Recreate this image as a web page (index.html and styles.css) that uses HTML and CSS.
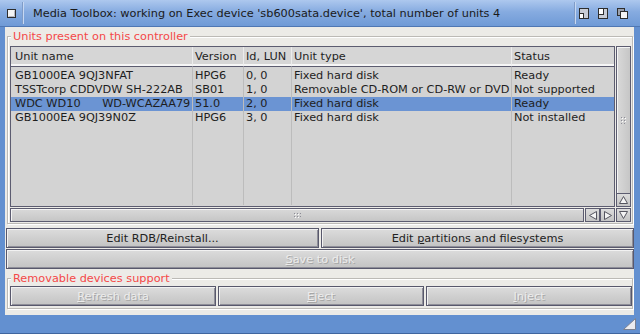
FILE: index.html
```html
<!DOCTYPE html>
<html lang="en">
<head>
    <meta charset="UTF-8">
    <title>Media Toolbox</title>
    <link rel="stylesheet" href="styles.css">
</head>
<body>
    <div class="window">
        <div class="titlebar">
            <svg class="close-gadget" width="9" height="9" viewBox="0 0 9 9">
                <rect x="0.5" y="0.5" width="8" height="8" fill="#f4f4f4" stroke="#2d2d2d"/>
                <path d="M1.5 7.5 H7.5 V1.5" fill="none" stroke="#b8b8c0"/>
            </svg>
            <span class="title-sep"></span>
            <div class="title">Media Toolbox: working on Exec device 'sb600sata.device', total number of units 4</div>
            <span class="title-sep right"></span>
            <div class="gadgets">
                <svg width="10" height="11" viewBox="0 0 10 11">
                    <rect x="0.5" y="0.5" width="9" height="10" fill="#c9cdd6" stroke="#2d2d2d"/>
                    <rect x="0.5" y="5.5" width="4" height="5" fill="#fff" stroke="#2d2d2d"/>
                </svg>
                <svg width="10" height="11" viewBox="0 0 10 11">
                    <rect x="0.5" y="0.5" width="9" height="10" fill="#c9cdd6" stroke="#2d2d2d"/>
                    <rect x="0.5" y="0.5" width="5" height="6" fill="#fff" stroke="#2d2d2d"/>
                </svg>
                <svg width="11" height="11" viewBox="0 0 11 11">
                    <rect x="0.5" y="0.5" width="7" height="7" fill="#9aa0ac" stroke="#2d2d2d"/>
                    <rect x="3.5" y="3.5" width="7" height="7" fill="#f4f4f4" stroke="#2d2d2d"/>
                </svg>
            </div>
        </div>

        <div class="window-body">
            <fieldset class="group units-group">
                <legend>Units present on this controller</legend>
                <div class="listview">
                    <div class="list">
                        <table class="units-table">
                            <colgroup>
                                <col class="c-name">
                                <col class="c-version">
                                <col class="c-id">
                                <col class="c-type">
                                <col class="c-status">
                            </colgroup>
                            <thead>
                                <tr>
                                    <th class="first">Unit name</th>
                                    <th>Version</th>
                                    <th>Id, LUN</th>
                                    <th>Unit type</th>
                                    <th>Status</th>
                                </tr>
                            </thead>
                            <tbody>
                                <tr>
                                    <td class="first">GB1000EA 9QJ3NFAT</td>
                                    <td>HPG6</td>
                                    <td>0, 0</td>
                                    <td>Fixed hard disk</td>
                                    <td>Ready</td>
                                </tr>
                                <tr>
                                    <td class="first">TSSTcorp CDDVDW SH-222AB</td>
                                    <td>SB01</td>
                                    <td>1, 0</td>
                                    <td>Removable CD-ROM or CD-RW or DVD</td>
                                    <td>Not supported</td>
                                </tr>
                                <tr class="selected">
                                    <td class="first">WDC WD10      WD-WCAZAA79</td>
                                    <td>51.0</td>
                                    <td>2, 0</td>
                                    <td>Fixed hard disk</td>
                                    <td>Ready</td>
                                </tr>
                                <tr>
                                    <td class="first">GB1000EA 9QJ39N0Z</td>
                                    <td>HPG6</td>
                                    <td>3, 0</td>
                                    <td>Fixed hard disk</td>
                                    <td>Not installed</td>
                                </tr>
                                <tr class="filler">
                                    <td></td><td></td><td></td><td></td><td></td>
                                </tr>
                            </tbody>
                        </table>
                    </div>

                    <div class="vscroll">
                        <div class="knob">
                            <svg width="5" height="7" viewBox="0 0 5 7">
                                <g fill="#8c8c96"><rect x="0" y="0" width="1" height="1"/><rect x="3" y="0" width="1" height="1"/><rect x="0" y="3" width="1" height="1"/><rect x="3" y="3" width="1" height="1"/><rect x="0" y="6" width="1" height="1"/><rect x="3" y="6" width="1" height="1"/></g>
                                <g fill="#fff"><rect x="1" y="1" width="1" height="1"/><rect x="4" y="1" width="1" height="1"/><rect x="1" y="4" width="1" height="1"/><rect x="4" y="4" width="1" height="1"/></g>
                            </svg>
                        </div>
                        <div class="arrow">
                            <svg width="9" height="8" viewBox="0 0 9 8"><path d="M4.5 0.5 L8.5 7.5 H0.5 Z" fill="#f4f4f4" stroke="#55555f"/></svg>
                        </div>
                    </div>

                    <div class="hscroll">
                        <div class="knob">
                            <svg width="7" height="5" viewBox="0 0 7 5">
                                <g fill="#8c8c96"><rect x="0" y="0" width="1" height="1"/><rect x="3" y="0" width="1" height="1"/><rect x="6" y="0" width="1" height="1"/><rect x="0" y="3" width="1" height="1"/><rect x="3" y="3" width="1" height="1"/><rect x="6" y="3" width="1" height="1"/></g>
                                <g fill="#fff"><rect x="1" y="1" width="1" height="1"/><rect x="4" y="1" width="1" height="1"/><rect x="1" y="4" width="1" height="1"/><rect x="4" y="4" width="1" height="1"/></g>
                            </svg>
                        </div>
                        <div class="arrow">
                            <svg width="8" height="9" viewBox="0 0 8 9"><path d="M0.5 4.5 L7.5 0.5 V8.5 Z" fill="#f4f4f4" stroke="#55555f"/></svg>
                        </div>
                        <div class="arrow">
                            <svg width="8" height="9" viewBox="0 0 8 9"><path d="M7.5 4.5 L0.5 0.5 V8.5 Z" fill="#f4f4f4" stroke="#55555f"/></svg>
                        </div>
                    </div>

                    <div class="arrow">
                        <svg width="9" height="8" viewBox="0 0 9 8"><path d="M4.5 7.5 L8.5 0.5 H0.5 Z" fill="#f4f4f4" stroke="#55555f"/></svg>
                    </div>
                </div>
            </fieldset>

            <div class="button-row">
                <button class="btn">Edit RDB/Reinstall...</button>
                <button class="btn">Edit <u>p</u>artitions and filesystems</button>
            </div>
            <button class="btn full" disabled><u>S</u>ave to disk</button>

            <fieldset class="group removable-group">
                <legend>Removable devices support</legend>
                <div class="button-row three">
                    <button class="btn" disabled><u>R</u>efresh data</button>
                    <button class="btn" disabled><u>E</u>ject</button>
                    <button class="btn" disabled><u>I</u>nject</button>
                </div>
            </fieldset>
        </div>

        <div class="bottom-border">
            <svg width="13" height="12" viewBox="0 0 13 12">
                <path d="M12.5 0.5 V11.5 H0.5 Z" fill="#ececf0" stroke="#7c8190"/>
            </svg>
        </div>
    </div>
</body>
</html>
```

FILE: styles.css
```css
body {
    margin: 0;
    background: #6390d0;
    font-family: 'DejaVu Sans', sans-serif;
    font-size: 11.3px;
    color: #1e1e1e;
}
.window {
    width: 640px;
    height: 334px;
    display: flex;
    flex-direction: column;
    background: #6390d0;
    overflow: hidden;
}

/* title bar */
.titlebar {
    height: 27px;
    display: flex;
    align-items: center;
    padding: 0 12px 0 7px;
    background: linear-gradient(#adc8ee, #86abe0 45%, #6f9ad6);
    border-bottom: 1px solid #4f77b3;
    box-sizing: border-box;
}
.close-gadget {
    display: block;
}
.title-sep {
    width: 1px;
    height: 22px;
    background: #7f9cc8;
    border-right: 1px solid #c7d8f2;
    margin: 0 9px 0 6px;
}
.title-sep.right {
    margin: 0 1px 0 auto;
}
.title {
    font-size: 11.3px;
    color: #1a1a1a;
    white-space: nowrap;
}
.gadgets {
    display: flex;
    gap: 9px;
    margin-left: 2px;
}
.gadgets svg {
    display: block;
}

/* body */
.window-body {
    flex: 1;
    margin: 0 6px 0 5px;
    padding: 0 0 0 1px;
    background: #ecebe7;
    display: flex;
    flex-direction: column;
}
.group {
    margin: 3px 1px 0 1px;
    padding: 3px 0 1px 2px;
    border: 1px solid #bcbab6;
    box-shadow: inset 1px 1px 0 #fff, 1px 1px 0 #fff;
    min-width: 0;
}
.group legend {
    color: #f44848;
    line-height: 13px;
    padding: 0 2px;
    margin-left: 1px;
    background: #ecebe7;
}
.removable-group {
    padding: 1px 0 2px 2px;
    margin-top: 3px;
}

/* list view */
.listview {
    display: grid;
    grid-template-columns: 605px 15px;
    grid-template-rows: 161px 14px;
    column-gap: 1px;
    row-gap: 1px;
}
.list {
    border: 1px solid #5c5c70;
    background: #d3d3d3;
    overflow: hidden;
}
.units-table {
    width: 603px;
    table-layout: fixed;
    border-collapse: separate;
    border-spacing: 0;
}
.c-name { width: 182px; }
.c-version { width: 51px; }
.c-id { width: 48px; }
.c-type { width: 220px; }
.c-status { width: 102px; }
.units-table th,
.units-table td {
    padding: 0 0 0 2px;
    text-align: left;
    font-weight: normal;
    white-space: pre;
    overflow: hidden;
    border-right: 1px solid #bcbcbc;
}
.units-table th:last-child,
.units-table td:last-child {
    border-right: none;
}
.units-table .first {
    padding-left: 4px;
}
.units-table th {
    background: #d6d6d6;
    padding-top: 2px;
    line-height: 15px;
    border-bottom: 2px solid #f6f6f6;
    border-right-color: #ececec;
}
.units-table td {
    line-height: 14px;
    height: 14px;
}
.units-table tbody tr:first-child td {
    border-top: 1px solid #5c5c70;
    padding-top: 2px;
}
.units-table tr.selected td {
    background: #6b94d3;
}
.units-table tr.filler td {
    height: 80px;
}

.knob {
    background: linear-gradient(90deg, #d9d9d9, #c6c6c6);
    border: 1px solid #5c5c70;
    box-shadow: inset 1px 1px 0 #f4f4f4;
    display: flex;
    align-items: center;
    justify-content: center;
}
.hscroll .knob {
    background: linear-gradient(#d9d9d9, #c6c6c6);
}
.vscroll {
    display: flex;
    flex-direction: column;
}
.vscroll .knob {
    flex: 1;
}
.hscroll {
    display: flex;
}
.hscroll .knob {
    flex: 1;
    margin-right: 1px;
}
.arrow {
    width: 13px;
    height: 12px;
    border: 1px solid #5c5c70;
    background: linear-gradient(#dcdcdc, #c4c4c4);
    display: flex;
    align-items: center;
    justify-content: center;
}
.arrow svg {
    display: block;
}
.vscroll .arrow {
    border-top: none;
}

/* buttons */
.button-row {
    display: grid;
    grid-template-columns: 1fr 1fr;
    gap: 2px;
    margin-top: 4px;
}
.button-row.three {
    grid-template-columns: 1fr 1fr 1fr;
    margin-top: 0;
}
.btn {
    height: 20px;
    padding: 0;
    font-family: 'DejaVu Sans', sans-serif;
    font-size: 11.3px;
    color: #222;
    background: linear-gradient(#dcdcdc, #c3c3c3);
    border: 1px solid #58586c;
    box-shadow: inset 1px 1px 0 #f2f2f2, inset -1px -1px 0 #8e8e98;
}
.btn.full {
    margin-top: 1px;
}
.btn:disabled {
    color: #ececec;
    text-shadow: 1px 1px 0 #a6a6a6;
}

/* bottom border with resize gadget */
.bottom-border {
    height: 19px;
    display: flex;
    justify-content: flex-end;
    align-items: flex-start;
    padding: 3px 4px 0 0;
    box-sizing: border-box;
    border-bottom: 1px solid #3f659e;
}
.bottom-border svg {
    display: block;
}
```
